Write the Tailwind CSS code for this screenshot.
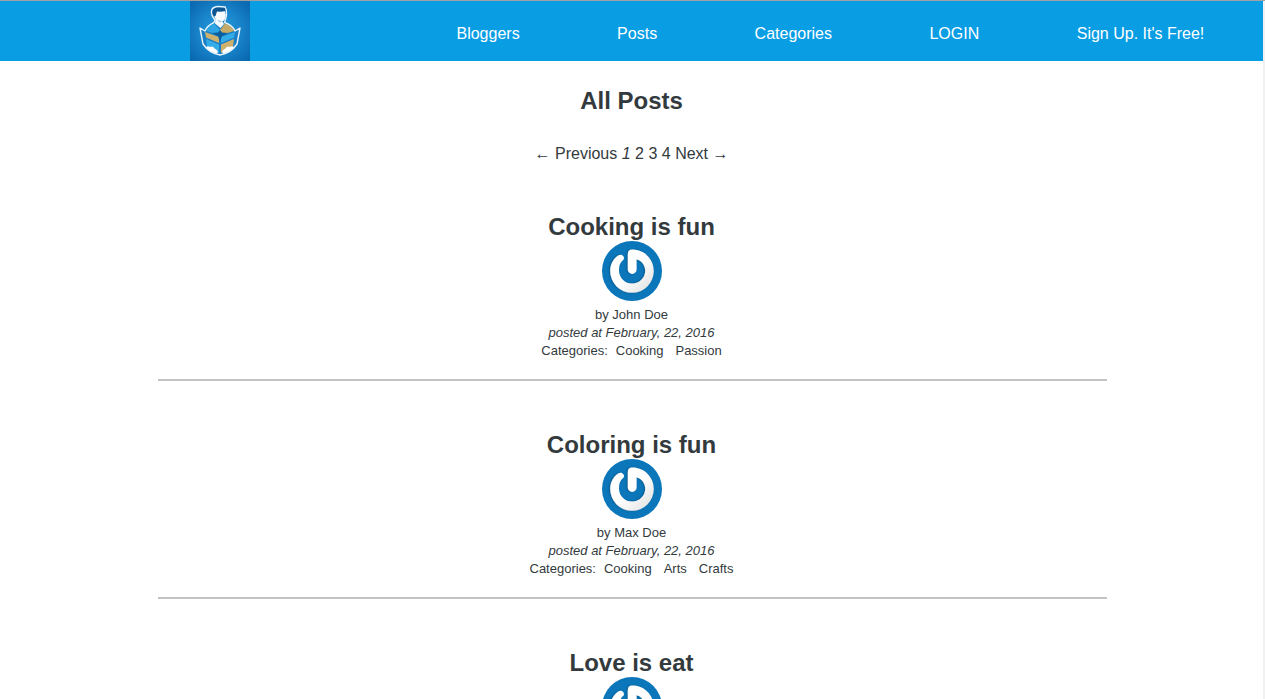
<!DOCTYPE html>
<html lang="en">
<head>
<meta charset="utf-8">
<meta name="viewport" content="width=device-width, initial-scale=1">
<title>All Posts</title>
<script src="https://cdn.jsdelivr.net/npm/@tailwindcss/browser@4"></script>
</head>
<body class="h-screen overflow-hidden border-t border-[#a0a0a0] bg-white font-['Liberation_Sans',Arial,sans-serif] text-base text-[#333a3d]">
<svg class="absolute size-0" aria-hidden="true">
  <defs>
    <linearGradient id="ring" x1="0" y1="0" x2="1" y2="1">
      <stop offset="0.5" stop-color="#fff"/><stop offset="1" stop-color="#dedede"/>
    </linearGradient>
    <filter id="shade" x="-20%" y="-20%" width="140%" height="140%">
      <feDropShadow dx="-1" dy="0" stdDeviation="0.9" flood-color="#04406c" flood-opacity="0.6"/>
    </filter>
    <symbol id="avatar" viewBox="0 0 60 60">
      <circle cx="30" cy="30" r="30" fill="#0b77ba"/>
      <g filter="url(#shade)">
        <path d="M16.6 14.2 C19.5 12.400 23.2 15.4 21.600 18.6 C18 21.4 16.9 25 17 29.4 A13.1 13.1 0 0 0 43.2 29.5 C43 24 39.5 19.5 34.6 18.2 L34.6 28.5 A4.4 4.4 0 0 1 25.8 28.5 L25.8 13.2 C25.8 10.2 27.3 8.6 30.2 8.6 C42 8.5 51.8 18 51.8 30 A21.8 21.8 0 0 1 8.2 30 C8.2 23 11.6 17.4 16.6 14.2Z" fill="url(#ring)"/>
      </g>
    </symbol>
  </defs>
</svg>

<header class="flex h-15 bg-[#099de4] pl-[15%]">
  <a href="#" aria-label="Home" class="size-15 shrink-0">
    <svg viewBox="0 0 60 60" class="size-15">
      <defs><radialGradient id="glow" r="0.65"><stop offset="0" stop-color="#2a9fe4"/><stop offset="0.5" stop-color="#1a86cb"/><stop offset="1" stop-color="#0a69b1"/></radialGradient></defs>
      <rect width="60" height="60" fill="url(#glow)"/>
      <path d="M10 27 L15 30 Q17 25 24 21.500 L25 19 Q21 14 21.500 10 Q22 6 28 5.500 L35 6 Q37 9 36.500 14 Q36 18 34.500 21.500 Q42 24 45 30 L50 27 L47 43 Q41 52 30 54 Q19 52 13 43Z" fill="#1b7fc6" stroke="#e9f4fb" stroke-width="1.400" stroke-linejoin="round"/>
      <path d="M23 13 L26 10 L35 10 L35.800 14 Q35.500 19 32.500 20.500 L34 23 L30.500 27 L25 22.500 L25.500 18Z" fill="#f7fbfd"/>
      <path d="M22.500 13 Q21.500 7 28 6.500 L35 7 L35.500 10 Q31 11 27 10.500 L25.500 15 L24 15.500Z" fill="#0c5591"/>
      <path d="M29 19.500 L32 20.500 L30 21.500 L27 19Z" fill="#8fc1e2"/>
      <path d="M16 30 Q18 25 24 22.500 L30 29 L29 34Z" fill="#2fa5e3"/>
      <path d="M44 30 Q42 25 35 22.500 L30 29 L31 34Z" fill="#c6ab68"/>
      <path d="M15 31 L29 36 L29 42 L16 36.500Z" fill="#cdb16d"/>
      <path d="M45 31 L31 36 L31 42 L44 36.500Z" fill="#34ace8"/>
      <path d="M16 38 L29 43.500 L29 52 L25 49 L17 45Z" fill="#34ace8"/>
      <path d="M44 38 L31 43.500 L31 52 L35 49 L43 45Z" fill="#cdb16d"/>
      <path d="M22 32 L28 31.500 L30 29 L32 31.500 L38 32 L32 35 L30 41 L28 35Z" fill="#0b5f9f"/>
      <path d="M16 46 Q18 44.500 20 46 Q23 44.500 24.500 47.500 Q27 48 28 51 L27 52.500 Q20 51 16 46ZM44 46 Q42 44.500 40 46 Q37 44.500 35.500 47.500 Q33 48 32 51 L33 52.500 Q40 51 44 46Z" fill="#fff"/>
    </svg>
  </a>
  <nav class="ml-[158px] mr-3 flex grow items-center justify-around pt-1.5 text-white">
    <a href="#">Bloggers</a>
    <a href="#">Posts</a>
    <a href="#">Categories</a>
    <a href="#">LOGIN</a>
    <a href="#">Sign Up. It's Free!</a>
  </nav>
</header>

<main class="mx-auto w-3/4 text-center">
  <h1 class="pt-6 pr-0.5 text-2xl font-bold">All Posts</h1>
  <nav aria-label="Pagination" class="mt-[25px] pr-0.5 pb-[47px] leading-6">
    <a href="#">← Previous</a> <em>1</em> <a href="#">2</a> <a href="#">3</a> <a href="#">4</a> <a href="#">Next →</a>
  </nav>

  <article class="mb-[50px] border-b-2 border-[#c3c3c3] pr-0.5 pb-[19px] text-[13px] leading-[18px]">
    <h2 class="text-2xl leading-7 font-bold"><a href="#">Cooking is fun</a></h2>
    <svg class="mx-auto mb-[5px] size-15" role="img" aria-label="John Doe"><use href="#avatar"/></svg>
    <p>by <a href="#">John Doe</a></p>
    <p class="italic">posted at February, 22, 2016</p>
    <p class="flex justify-center"><span class="mr-2">Categories:</span><span class="flex gap-3"><a href="#">Cooking</a><a href="#">Passion</a></span></p>
  </article>

  <article class="mb-[50px] border-b-2 border-[#c3c3c3] pr-0.5 pb-[19px] text-[13px] leading-[18px]">
    <h2 class="text-2xl leading-7 font-bold"><a href="#">Coloring is fun</a></h2>
    <svg class="mx-auto mb-[5px] size-15" role="img" aria-label="Max Doe"><use href="#avatar"/></svg>
    <p>by <a href="#">Max Doe</a></p>
    <p class="italic">posted at February, 22, 2016</p>
    <p class="flex justify-center"><span class="mr-2">Categories:</span><span class="flex gap-3"><a href="#">Cooking</a><a href="#">Arts</a><a href="#">Crafts</a></span></p>
  </article>

  <article class="pr-0.5">
    <h2 class="text-2xl leading-7 font-bold"><a href="#">Love is eat</a></h2>
    <svg class="mx-auto size-15" aria-hidden="true"><use href="#avatar"/></svg>
  </article>
</main>
<div class="fixed top-px right-0 bottom-0 w-0.5 bg-[#f1f1f1]"></div>
</body>
</html>
